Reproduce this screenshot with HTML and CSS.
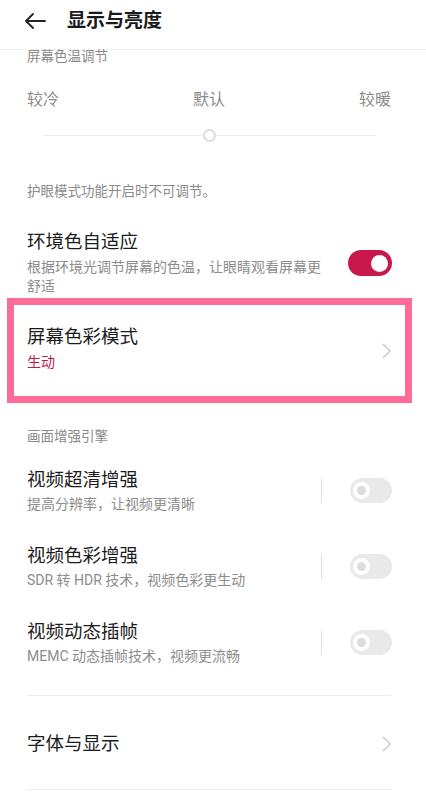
FILE: index.html
```html
<!DOCTYPE html>
<html lang="zh-CN">
<head>
<meta charset="utf-8">
<link rel="stylesheet" href="styles.css">
</head>
<body>
<div class="page">
  <header class="header">
    <svg class="back" width="22" height="16" viewBox="0 0 22 16"><path d="M21 8H2M9 1L2 8L9 15" fill="none" stroke="#222" stroke-width="1.8" stroke-linecap="round" stroke-linejoin="round"/></svg>
    <h1 class="title">显示与亮度</h1>
  </header>

  <div class="sec-label first">屏幕色温调节</div>
  <div class="temp-row">
    <span>较冷</span><span>默认</span><span>较暖</span>
  </div>
  <div class="slider">
    <span class="track"></span><span class="thumb"></span><span class="track"></span>
  </div>
  <div class="note">护眼模式功能开启时不可调节。</div>

  <div class="row adapt">
    <div class="text">
      <div class="item-title">环境色自适应</div>
      <div class="item-sub wrap">根据环境光调节屏幕的色温，让眼睛观看屏幕更舒适</div>
    </div>
    <div class="toggle on"><span class="knob"></span></div>
  </div>

  <div class="highlight">
    <div class="hl-inner">
      <div class="text">
        <div class="item-title">屏幕色彩模式</div>
        <div class="item-sub accent">生动</div>
      </div>
      <svg class="chev" width="9" height="16" viewBox="0 0 9 16"><path d="M1 1L8 8L1 15" fill="none" stroke="#c6c6c6" stroke-width="1.4"/></svg>
    </div>
  </div>

  <div class="sec-label engine">画面增强引擎</div>

  <div class="row video">
    <div class="text">
      <div class="item-title">视频超清增强</div>
      <div class="item-sub">提高分辨率，让视频更清晰</div>
    </div>
    <span class="vline"></span>
    <div class="toggle off"><span class="knob"></span></div>
  </div>
  <div class="row video">
    <div class="text">
      <div class="item-title">视频色彩增强</div>
      <div class="item-sub">SDR 转 HDR 技术，视频色彩更生动</div>
    </div>
    <span class="vline"></span>
    <div class="toggle off"><span class="knob"></span></div>
  </div>
  <div class="row video">
    <div class="text">
      <div class="item-title">视频动态插帧</div>
      <div class="item-sub">MEMC 动态插帧技术，视频更流畅</div>
    </div>
    <span class="vline"></span>
    <div class="toggle off"><span class="knob"></span></div>
  </div>

  <div class="divider d1"></div>
  <div class="row font-row">
    <div class="item-title">字体与显示</div>
    <svg class="chev" width="9" height="16" viewBox="0 0 9 16"><path d="M1 1L8 8L1 15" fill="none" stroke="#c6c6c6" stroke-width="1.4"/></svg>
  </div>
  <div class="divider d2"></div>
</div>
</body>
</html>
```

FILE: styles.css
```css
* { box-sizing: border-box; }
html, body { margin: 0; padding: 0; background: #fff; }
body {
  font-family: Roboto, "Noto Sans CJK SC", sans-serif;
  color: #1c1c1c;
  width: 426px;
  height: 806px;
  overflow: hidden;
}
.page { width: 426px; }

.header {
  height: 50px;
  display: flex;
  align-items: center;
  padding: 0 0 8px 24px;
  border-bottom: 1px solid #f1f1f1;
}
.back { display: block; }
.title {
  margin: 0 0 0 21px;
  font-size: 19px;
  font-weight: 700;
  line-height: 24px;
  color: #1a1a1a;
}

.sec-label {
  font-size: 13.5px;
  line-height: 12px;
  color: #8a8a8a;
  padding-left: 27px;
}
.sec-label.engine { margin-top: 26px; line-height: 14px; }

.temp-row {
  margin-top: 28px;
  display: flex;
  justify-content: space-between;
  padding: 0 35px 0 27px;
  font-size: 16px;
  line-height: 20px;
  color: #8a8a8a;
}

.slider {
  margin: 19px 50px 0 43px;
  height: 12px;
  display: flex;
  align-items: center;
}
.track { flex: 1; height: 1px; background: #ececec; }
.thumb {
  width: 13px;
  height: 13px;
  border-radius: 50%;
  border: 2px solid #dcdcdc;
  background: #fff;
}

.note {
  margin-top: 42px;
  padding-left: 27px;
  font-size: 13.5px;
  line-height: 16px;
  color: #8a8a8a;
}

.row {
  display: flex;
  align-items: center;
  padding: 0 34px 0 27px;
}
.row .text { flex: 1; }
.item-title {
  font-size: 18.5px;
  line-height: 24px;
  color: #1c1c1c;
}
.item-sub {
  font-size: 14px;
  line-height: 18px;
  color: #8c8c8c;
  margin-top: 3px;
}
.item-sub.wrap { width: 300px; line-height: 19px; margin-top: 4px; }
.item-sub.accent { color: #bf1a4c; margin-top: 4px; line-height: 19px; }

.adapt { margin-top: 31px; }

.toggle {
  display: flex;
  align-items: center;
  border-radius: 13px;
  flex: none;
}
.toggle.on {
  width: 44px;
  height: 26px;
  background: #c8174a;
  justify-content: flex-end;
  padding: 0 4.5px;
}
.toggle.on .knob {
  width: 17px;
  height: 17px;
  border-radius: 50%;
  background: #fff;
}
.toggle.off {
  width: 42px;
  height: 25px;
  background: #e9e9e9;
  justify-content: flex-start;
  padding: 0 3px;
  margin-left: 28px;
}
.toggle.off .knob {
  flex: none;
  width: 17px;
  height: 17px;
  border-radius: 50%;
  border: 4px solid #fff;
  background: #dcdcdc;
}

.highlight {
  margin: 2px 0 0 7px;
  width: 405px;
  height: 105px;
  border: 7px solid #fd6b96;
}
.hl-inner {
  height: 91px;
  display: flex;
  align-items: center;
  padding: 0 14px 0 13px;
}
.hl-inner .text { flex: 1; padding-bottom: 5px; }
.chev { display: block; flex: none; }

.video { margin-top: 31px; }
.engine + .video { margin-top: 25px; }
.vline {
  width: 1px;
  height: 25px;
  background: #e2e2e2;
  flex: none;
}

.divider {
  height: 1px;
  background: #ececec;
  margin: 0 35px 0 27px;
}
.d1 { margin-top: 30px; }
.font-row { margin-top: 36px; justify-content: space-between; padding-right: 35px; }
.d2 { margin-top: 33px; }
```
